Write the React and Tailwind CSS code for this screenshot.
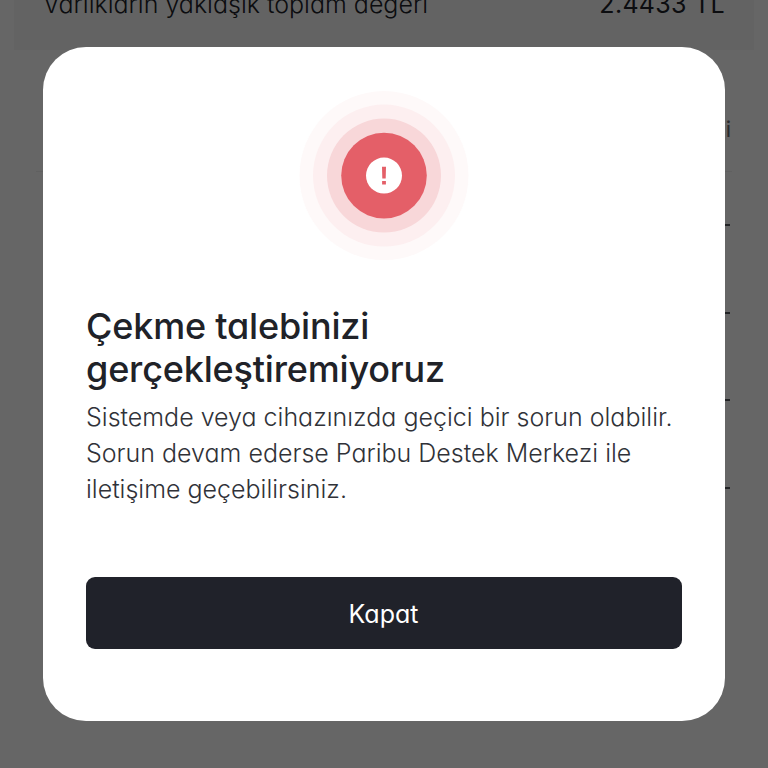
const ASSET_ROWS = ['btc', 'eth', 'usdt', 'avax'];

const AlertBadge = () => (
  <svg className="mx-auto block h-[172px] w-[172px]" viewBox="0 0 172 172" fill="none">
    <circle cx="86" cy="85.6" r="84.5" fill="#fef9f9" />
    <circle cx="86" cy="85.6" r="71" fill="#fdeff0" />
    <circle cx="86" cy="85.6" r="57" fill="#f8d7d9" />
    <circle cx="86" cy="85.6" r="42.8" fill="#e45f68" />
    <circle cx="86" cy="85.6" r="18" fill="#ffffff" />
    <path d="M84 76.8h4l-.3 11.6h-3.4zM84.1 91h3.8v3.5h-3.8z" fill="#e45f68" />
  </svg>
);

const WalletPage = () => (
  <div className="h-full bg-white">
    {/* Total balance */}
    <div className="mx-[14px] flex h-[50px] justify-between bg-[#f8f8f8] pl-[29px] pr-[29px] text-[25px] leading-[36px] text-[#202228]">
      <span className="-mt-[14px] font-light">
        Varlıkların yaklaşık toplam değeri
      </span>
      <span className="-mt-[14px] tracking-[0.3px]">2.4433 TL</span>
    </div>

    {/* Assets */}
    <div className="flex justify-end pr-[37px] pt-[61px] text-[22px] leading-[36px] text-[#6b6d72]">
      <span>i</span>
    </div>
    <div className="ml-[36px] mr-[36px] mt-[24px] h-px bg-[#f0f0f0]" />
    <div className="mt-[10px] flex flex-col">
      {ASSET_ROWS.map((asset) => (
        <div key={asset} className="flex h-[87.5px] justify-end pr-[38px] pt-[42px]">
          <span className="h-[2px] w-[10px] bg-[#55575c]" />
        </div>
      ))}
    </div>
  </div>
);

const ErrorDialog = () => (
  <div
    role="alertdialog"
    className="h-[674px] w-[682px] rounded-[43px] bg-white px-[43px] pt-[43px] text-[#202228]"
  >
    <AlertBadge />
    <h1 className="mt-[43px] text-[36px] font-medium leading-[43px] tracking-[-0.18px]">
      Çekme talebinizi
      <br />
      gerçekleştiremiyoruz
    </h1>
    <p className="mt-[8px] whitespace-nowrap text-[25px] font-light leading-[36px] text-[#303238]">
      Sistemde veya cihazınızda geçici bir sorun olabilir.
      <br />
      Sorun devam ederse Paribu Destek Merkezi ile
      <br />
      iletişime geçebilirsiniz.
    </p>
    <button className="mt-[70px] h-[72px] w-full rounded-[9px] bg-[#20222a] pt-[3px] pr-[1px] text-[25px] text-white">
      Kapat
    </button>
  </div>
);

export default function App() {
  return (
    <div
      lang="tr"
      className="relative h-[768px] w-[768px] overflow-hidden font-['Inter',sans-serif] [font-feature-settings:'cv11']"
    >
      <WalletPage />
      <div className="absolute inset-0 flex items-start justify-center bg-black/60 pt-[47px]">
        <ErrorDialog />
      </div>
    </div>
  );
}
